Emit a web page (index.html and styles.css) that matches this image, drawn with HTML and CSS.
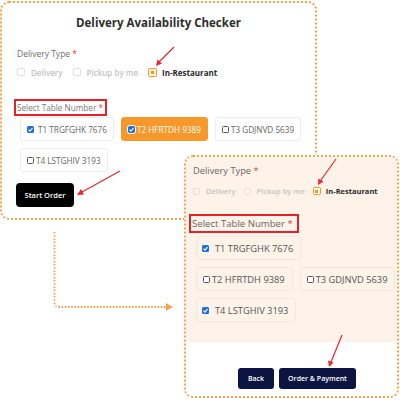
FILE: index.html
```html
<!DOCTYPE html>
<html>
<head>
<meta charset="utf-8">
<link rel="stylesheet" href="styles.css">
</head>
<body>
<div class="stage">
  <section class="card card-main">
    <h1 class="title">Delivery Availability Checker</h1>
    <div class="field-label">Delivery Type <span class="req">*</span></div>
    <div class="type-row">
      <div class="type-opt disabled"><span class="box"></span>Delivery</div>
      <div class="type-opt disabled"><span class="box"></span>Pickup by me</div>
      <div class="type-opt active"><span class="box"><span class="dot"></span></span>In-Restaurant</div>
    </div>
    <div class="table-label">Select Table Number <span class="req">*</span></div>
    <div class="tables">
      <div class="table checked"><span class="cb"><svg viewBox="0 0 10 10"><path d="M2.2 5.3 L4.2 7.3 L7.9 2.9"/></svg></span>T1 TRGFGHK 7676</div>
      <div class="table checked selected"><span class="cb"><svg viewBox="0 0 10 10"><path d="M2.2 5.3 L4.2 7.3 L7.9 2.9"/></svg></span>T2 HFRTDH 9389</div>
      <div class="table"><span class="cb"></span>T3 GDJNVD 5639</div>
      <div class="table"><span class="cb"></span>T4 LSTGHIV 3193</div>
    </div>
    <button class="btn btn-black">Start Order</button>
  </section>

  <svg class="connector" width="400" height="400" viewBox="0 0 400 400">
    <path d="M54.5 232 L54.5 302 Q54.5 307 59.5 307 L166 307" />
    <polygon points="166,303 173,307 166,311" />
  </svg>

  <section class="card card-detail">
    <div class="detail-body">
      <div class="field-label">Delivery Type <span class="req">*</span></div>
      <div class="type-row">
        <div class="type-opt disabled"><span class="box"></span>Delivery</div>
        <div class="type-opt disabled"><span class="box"></span>Pickup by me</div>
        <div class="type-opt active"><span class="box"><span class="dot"></span></span>In-Restaurant</div>
      </div>
      <div class="table-label">Select Table Number <span class="req">*</span></div>
      <div class="tables">
        <div class="table checked"><span class="cb"><svg viewBox="0 0 10 10"><path d="M2.2 5.3 L4.2 7.3 L7.9 2.9"/></svg></span>T1 TRGFGHK 7676</div>
        <div class="table"><span class="cb"></span>T2 HFRTDH 9389</div>
        <div class="table"><span class="cb"></span>T3 GDJNVD 5639</div>
        <div class="table checked"><span class="cb"><svg viewBox="0 0 10 10"><path d="M2.2 5.3 L4.2 7.3 L7.9 2.9"/></svg></span>T4 LSTGHIV 3193</div>
      </div>
    </div>
    <div class="detail-footer">
      <button class="btn btn-navy">Back</button>
      <button class="btn btn-navy">Order &amp; Payment</button>
    </div>
  </section>

  <svg class="arrows" width="400" height="400" viewBox="0 0 400 400">
    <g class="arrow">
      <line x1="174" y1="47" x2="159" y2="62"/>
      <polygon points="156,66 157.5,59.5 162,63.5"/>
    </g>
    <g class="arrow">
      <line x1="120" y1="171" x2="82" y2="192"/>
      <polygon points="77,195 81,189 84,194.5"/>
    </g>
    <g class="arrow">
      <line x1="336" y1="159" x2="321" y2="180"/>
      <polygon points="318,185 318.5,178.5 323.5,181.5"/>
    </g>
    <g class="arrow">
      <line x1="342" y1="335" x2="331" y2="362"/>
      <polygon points="329,367 328,360.5 333.5,362.5"/>
    </g>
  </svg>
</div>
</body>
</html>
```

FILE: styles.css
```css
* { box-sizing: border-box; }

html, body {
  margin: 0;
  padding: 0;
  background: #ffffff;
}

body {
  font-family: "Open Sans", "Noto Sans", sans-serif;
  color: #555;
}

.stage {
  position: relative;
  width: 400px;
  height: 400px;
  overflow: hidden;
}

.card {
  position: absolute;
  border: 2px dotted #f8a34c;
  border-radius: 9px;
  background: #ffffff;
}

/* ---------- main card ---------- */
.card-main {
  left: 0;
  top: 1px;
  width: 317px;
  height: 219px;
  padding: 12px 0 0 15px;
}

.title {
  margin: 0 0 0 -15px;
  text-align: center;
  font-size: 11.5px;
  line-height: 16px;
  font-weight: 700;
  color: #2e2e2e;
}

.field-label {
  font-size: 8.5px;
  line-height: 12px;
  color: #6f6f6f;
}

.req { color: #e53935; }

.card-main .field-label { margin-top: 17px; }

.type-row {
  display: flex;
  align-items: center;
  height: 10px;
}

.type-opt {
  display: flex;
  align-items: center;
  gap: 6px;
  font-size: 8px;
  font-weight: 600;
  color: #c4c4c4;
  margin-right: 10px;
}

.type-opt .box {
  width: 8px;
  height: 8px;
  border: 1px solid #e0e0e0;
  border-radius: 1.5px;
  background: #fff;
  display: flex;
  align-items: center;
  justify-content: center;
}

.type-opt.active {
  color: #2a2a2a;
  font-weight: 700;
  gap: 5px;
}

.type-opt.active .box {
  width: 9px;
  height: 9px;
  border-color: #f7982a;
  background: #fff3e4;
}

.type-opt.active .dot {
  width: 3px;
  height: 3px;
  background: #f7982a;
}

.card-main .type-row { margin-top: 7px; }

.table-label {
  display: inline-block;
  border: 2px solid #e5222a;
  font-size: 8.2px;
  line-height: 13px;
  padding: 0 2px 0 1px;
  color: #7a7a7a;
}

.card-main .table-label {
  margin: 22px 0 0 -3px;
}

.tables {
  display: flex;
  flex-wrap: wrap;
  column-gap: 7px;
  row-gap: 7px;
}

.card-main .tables {
  margin: 1px 0 0 3px;
  width: 290px;
}

.table {
  display: flex;
  align-items: center;
  height: 24px;
  padding: 0 6px;
  gap: 2px;
  border: 1px solid #ececec;
  border-radius: 3px;
  background: #ffffff;
  font-size: 8.2px;
  color: #666;
  white-space: nowrap;
}

.table.checked { gap: 4px; }

.table .cb {
  width: 7px;
  height: 7px;
  border: 1px solid #555;
  border-radius: 1.5px;
  background: #fff;
  display: flex;
  align-items: center;
  justify-content: center;
  flex: none;
}

.table.checked .cb {
  border: none;
  background: #1f6fe0;
}

.table .cb svg {
  width: 100%;
  height: 100%;
  fill: none;
  stroke: #fff;
  stroke-width: 1.6;
}

.table.selected {
  background: #f7982a;
  border-color: #f7982a;
  color: #ffffff;
  gap: 2px;
}

.table.selected .cb {
  outline: 1px solid #fff;
}

.btn {
  font-family: "Open Sans", "Noto Sans", sans-serif;
  border: none;
  color: #fff;
  font-weight: 600;
  cursor: pointer;
  padding: 0;
}

.btn-black {
  display: block;
  margin: 11px 0 0 -1px;
  width: 58px;
  height: 24px;
  border-radius: 4px;
  background: #000;
  font-size: 7.5px;
}

/* ---------- connector ---------- */
.connector, .arrows {
  position: absolute;
  left: 0;
  top: 0;
  pointer-events: none;
}

.connector path {
  fill: none;
  stroke: #f8a34c;
  stroke-width: 1.8;
  stroke-dasharray: 1.6 1.6;
}

.connector polygon { fill: #f8a34c; }

.arrows line {
  stroke: #e8262b;
  stroke-width: 1.2;
}

.arrows polygon { fill: #e8262b; }

/* ---------- detail card ---------- */
.card-detail {
  left: 184px;
  top: 155px;
  width: 215px;
  height: 243px;
  overflow: hidden;
  display: flex;
  flex-direction: column;
}

.detail-body {
  background: #fef3e8;
  padding: 8px 0 20px 7px;
}

.card-detail .field-label {
  font-size: 9.3px;
  line-height: 12px;
  color: #666;
}

.card-detail .type-row { margin-top: 9px; }

.card-detail .type-opt {
  font-size: 7.5px;
  gap: 6px;
  margin-right: 8px;
}

.card-detail .type-opt .box {
  width: 7px;
  height: 7px;
  border-color: #e6dcd2;
  background: #fef3e8;
}

.card-detail .type-opt.active { gap: 5px; }

.card-detail .type-opt.active .box {
  width: 8px;
  height: 8px;
  border-color: #f7982a;
  background: #fff6ea;
}

.card-detail .table-label {
  margin: 18px 0 0 -4px;
  font-size: 9.6px;
  line-height: 15px;
  padding: 0 4px 0 1px;
  color: #666;
}

.card-detail .tables {
  margin: 3px 0 0 3px;
  width: 202px;
}

.card-detail .table {
  height: 24px;
  padding: 0 7px 0 6px;
  background: #fef3e8;
  border-color: #f5e8da;
  font-size: 9.3px;
  color: #555;
  gap: 2px;
}

.card-detail .table.checked { gap: 6px; padding-left: 5px; }

.card-detail .table .cb { width: 7px; height: 7px; }

.detail-footer {
  flex: 1;
  background: #ffffff;
  display: flex;
  align-items: flex-start;
  gap: 5px;
  padding: 26px 0 0 52px;
}

.btn-navy {
  height: 21px;
  border-radius: 3px;
  background: #0c1542;
  font-size: 7px;
}

.btn-navy:first-child { width: 36px; }
.btn-navy:last-child { width: 77px; }
```
